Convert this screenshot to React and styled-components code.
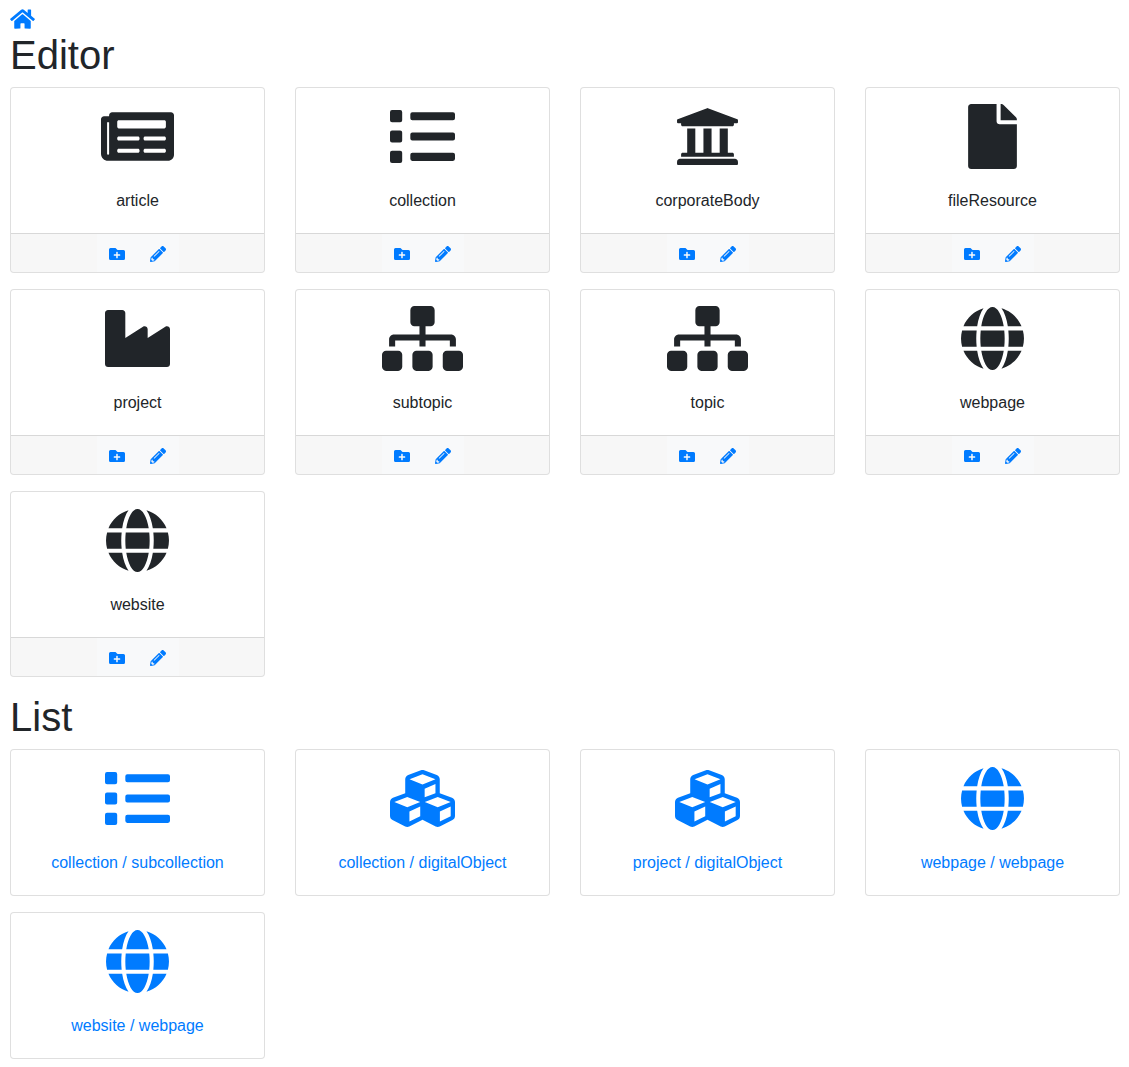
import styled, { createGlobalStyle } from "styled-components";
import {
  FaHome,
  FaNewspaper,
  FaList,
  FaUniversity,
  FaFile,
  FaIndustry,
  FaSitemap,
  FaGlobe,
  FaCubes,
  FaFolderPlus,
  FaPencilAlt,
} from "react-icons/fa";

const ICON_HEIGHT = 65;

const GlobalStyle = createGlobalStyle`
  body {
    margin: 0;
    background: #fff;
    color: #212529;
    font-family: "Liberation Sans", Arial, sans-serif;
    font-size: 16px;
    line-height: 1.5;
  }
`;

const Page = styled.div`
  padding: 8px 9px 8px 10px;
`;

const HomeLink = styled.a`
  display: block;
  height: 23px;
  color: #007bff;
  line-height: 0;

  svg {
    width: 25px;
    height: 22px;
  }
`;

const Heading = styled.h1`
  margin: 0 0 8px;
  font-size: 40px;
  font-weight: 500;
  line-height: 48px;
`;

const CardGrid = styled.div`
  display: grid;
  grid-template-columns: repeat(4, 255px);
  column-gap: 30px;
  row-gap: 16px;
  margin-bottom: 16px;
`;

const Card = styled.div`
  border: 1px solid rgba(0, 0, 0, 0.125);
  border-radius: 4px;
  overflow: hidden;
  background: #fff;
`;

const CardBody = styled.div`
  height: 145px;
  box-sizing: border-box;
  padding-top: 16px;
  text-align: center;
  color: ${(p) => (p.$link ? "#007bff" : "#212529")};
`;

const IconSlot = styled.div`
  height: 64px;
  margin-bottom: 21px;
  line-height: 0;

  svg {
    width: ${(p) => Math.round((p.$box / 512) * ICON_HEIGHT)}px;
    height: ${ICON_HEIGHT}px;
  }
`;

const CardFooter = styled.div`
  display: flex;
  justify-content: center;
  border-top: 1px solid rgba(0, 0, 0, 0.125);
  background: rgba(0, 0, 0, 0.03);
`;

const ActionButton = styled.button`
  display: flex;
  align-items: center;
  justify-content: center;
  width: 41px;
  height: 38px;
  padding: 2px 0 0;
  border: 0;
  background: #f8f9fa;
  color: #007bff;
  font-size: 16px;
`;

// box = width of the icon's viewBox, the height is always 512
const editorCards = [
  { label: "article", Icon: FaNewspaper, box: 576 },
  { label: "collection", Icon: FaList, box: 512 },
  { label: "corporateBody", Icon: FaUniversity, box: 512 },
  { label: "fileResource", Icon: FaFile, box: 384 },
  { label: "project", Icon: FaIndustry, box: 512 },
  { label: "subtopic", Icon: FaSitemap, box: 640 },
  { label: "topic", Icon: FaSitemap, box: 640 },
  { label: "webpage", Icon: FaGlobe, box: 496 },
  { label: "website", Icon: FaGlobe, box: 496 },
];

const listCards = [
  { label: "collection / subcollection", Icon: FaList, box: 512 },
  { label: "collection / digitalObject", Icon: FaCubes, box: 512 },
  { label: "project / digitalObject", Icon: FaCubes, box: 512 },
  { label: "webpage / webpage", Icon: FaGlobe, box: 496 },
  { label: "website / webpage", Icon: FaGlobe, box: 496 },
];

const App = () => {
  return (
    <Page>
      <GlobalStyle />
      <HomeLink href="#">
        <FaHome />
      </HomeLink>
      <Heading>Editor</Heading>
      <CardGrid>
        {editorCards.map(({ label, Icon, box }) => (
          <Card key={label}>
            <CardBody>
              <IconSlot $box={box}>
                <Icon />
              </IconSlot>
              {label}
            </CardBody>
            <CardFooter>
              <ActionButton>
                <FaFolderPlus />
              </ActionButton>
              <ActionButton>
                <FaPencilAlt />
              </ActionButton>
            </CardFooter>
          </Card>
        ))}
      </CardGrid>
      <Heading>List</Heading>
      <CardGrid>
        {listCards.map(({ label, Icon, box }) => (
          <Card key={label}>
            <CardBody $link>
              <IconSlot $box={box}>
                <Icon />
              </IconSlot>
              {label}
            </CardBody>
          </Card>
        ))}
      </CardGrid>
    </Page>
  );
};

export default App;
